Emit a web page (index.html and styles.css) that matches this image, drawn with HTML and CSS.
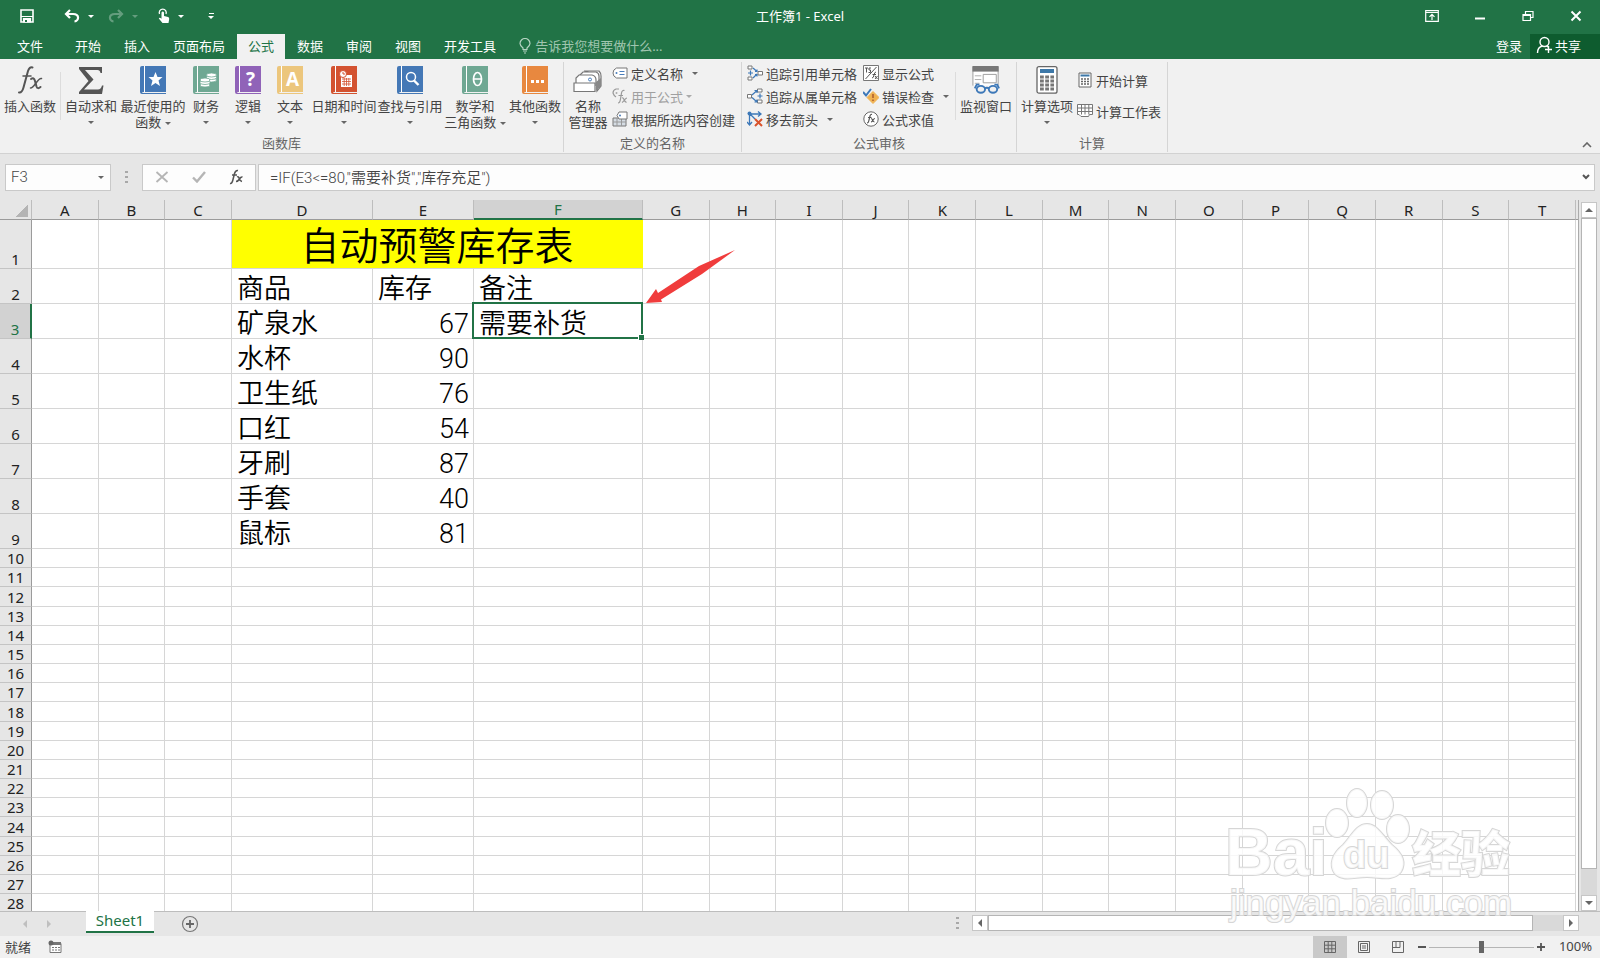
FILE: index.html
```html
<!DOCTYPE html>
<html lang="zh-CN">
<head>
    <meta charset="UTF-8">
    <title>工作簿1 - Excel</title>
    <link rel="stylesheet" href="styles.css">
</head>
<body>
<div class="app">
    <!-- 标题栏 -->
    <div class="titlebar">
        <div class="quick">
            <button class="save" aria-label="保存"><svg width="14" height="14" viewBox="0 0 14 14"><path d="M1 1h12v12H1z" fill="none" stroke="#fff" stroke-width="1.6"/><path d="M1 7.5h12M3.500 13V9.500h7V13z" fill="#fff" stroke="#fff" stroke-width="1.2"/><path d="M5 11h2v2H5z" fill="#217346"/></svg></button>
            <button aria-label="撤消"><svg width="16" height="14" viewBox="0 0 16 14"><path d="M6 1L2 5l4 4M2.500 5H9c7 0 6 7 1.500 7.500" fill="none" stroke="#fff" stroke-width="2.200"/></svg><i class="caret white"></i></button>
            <button class="off" aria-label="恢复"><svg width="16" height="14" viewBox="0 0 16 14"><path d="M10 1l4 4-4 4M13.500 5H7C0 5 1 12 5.500 12.500" fill="none" stroke="#fff" stroke-width="2.200"/></svg><i class="caret white"></i></button>
            <button class="touch" aria-label="触摸/鼠标模式"><svg width="12" height="16" viewBox="0 0 12 16"><path d="M1.500 6A3.500 3.500 0 1 1 8 6" fill="none" stroke="#fff" stroke-width="1.300"/><path d="M3.500 4.500q1.400-2 2.500 0V8l4 1q1.500.5 1.200 2L10.500 15H4.500L.8 10.500q.8-1.500 2.700.3z" fill="#fff"/></svg><i class="caret white"></i></button>
            <button class="more" aria-label="自定义快速访问工具栏"><i class="bar"></i><i class="caret white"></i></button>
        </div>
        <h1>工作簿1 - Excel</h1>
        <div class="wins">
            <button aria-label="功能区显示选项"><svg width="14" height="12" viewBox="0 0 14 12"><path d="M.7.7h12.600v10.600H.7zM.7 2.500h12.600M7 10V4.500M4.500 6.800L7 4.300l2.500 2.500" fill="none" stroke="#fff" stroke-width="1.200"/></svg></button>
            <button aria-label="最小化"><svg width="12" height="12" viewBox="0 0 12 12"><path d="M1 8.500h10" stroke="#fff" stroke-width="2"/></svg></button>
            <button aria-label="还原"><svg width="12" height="12" viewBox="0 0 12 12"><path d="M1 4.500h7.500V10.500H1zM1 5.500h7.500M3.500 4V1.500H11V7.500H9" fill="none" stroke="#fff" stroke-width="1.200"/></svg></button>
            <button aria-label="关闭"><svg width="12" height="12" viewBox="0 0 12 12"><path d="M1.500 1.500l9 9M10.500 1.500l-9 9" stroke="#fff" stroke-width="2"/></svg></button>
        </div>
    </div>

    <!-- 选项卡 -->
    <div class="tabs">
        <button class="file">文件</button>
        <button>开始</button>
        <button>插入</button>
        <button>页面布局</button>
        <button class="current">公式</button>
        <button>数据</button>
        <button>审阅</button>
        <button>视图</button>
        <button>开发工具</button>
        <label class="tell"><svg width="12" height="16" viewBox="0 0 12 16"><path d="M4 11.500V10Q1 7.500 1 5.500a5 5 0 0 1 10 0Q11 7.500 8 10v1.500zM4 13h4M5 15h2" fill="none" stroke="#b5d3c1" stroke-width="1.200"/></svg><input type="text" placeholder="告诉我您想要做什么..." aria-label="告诉我您想要做什么"></label>
        <button class="login">登录</button>
        <button class="share"><svg width="18" height="18" viewBox="0 0 18 18"><circle cx="8.500" cy="6" r="4.500" fill="none" stroke="#fff" stroke-width="1.400"/><path d="M1.500 17q0-6 5-7M10.500 10l1.500 1M9 13.500h7M12.500 10v7" fill="none" stroke="#fff" stroke-width="1.400"/></svg>共享</button>
    </div>

    <!-- 功能区 -->
    <div class="ribbon">
        <div class="group">
            <div class="tools">
                <button class="big m"><svg width="28" height="28" viewBox="0 0 28 28"><g fill="none" stroke="#555" stroke-linecap="round"><path d="M3 26.500q3 .5 4.500-5L12 5q1.500-4.500 4.500-3.500" stroke-width="2"/><path d="M7 10h8" stroke-width="1.500"/><path d="M15 13q3-2 4 2l1.500 5.500q1 3 4 .5" stroke-width="2"/><path d="M25.500 12.500q-2-.5-5.500 4.500t-5.500 5" stroke-width="1.500"/></g></svg><span>插入函数</span></button>
                <i class="sep"></i>
                <button class="big m"><svg width="28" height="28" viewBox="0 0 28 28"><path d="M2 1h23v6h-1.500q-.5-3-3-3H8l8.500 9.500L7 23.500h14q3 0 4-4h1.500L25 28H2v-2l9.500-11L2 3z" fill="#555"/></svg><span>自动求和</span><i class="caret"></i></button>
                <button class="big l"><svg class="book blue" width="26" height="28" viewBox="0 0 26 28"><path d="M2 0h24v26H3q-2 .5 0 1h23v1H2q-2 0-2-2V2q0-2 2-2z"/><path d="M4 0h1v26H4z" fill="#fff"/><path d="M15.500 6l2 5h5l-4 3.500 1.500 5.500-4.500-3-4.500 3 1.500-5.500-4-3.500h5z" fill="#fff"/></svg><span>最近使用的<br>函数 <i class="caret"></i></span></button>
                <button class="big s"><svg class="book green" width="26" height="28" viewBox="0 0 26 28"><path d="M2 0h24v26H3q-2 .5 0 1h23v1H2q-2 0-2-2V2q0-2 2-2z"/><path d="M4 0h1v26H4z" fill="#fff"/><g fill="#fff" stroke="#6fa893" stroke-width=".8"><ellipse cx="18.500" cy="14" rx="5" ry="2"/><ellipse cx="18.500" cy="11.500" rx="5" ry="2"/><ellipse cx="18.500" cy="9" rx="5" ry="2"/><ellipse cx="12" cy="19" rx="5" ry="2"/><ellipse cx="12" cy="16.500" rx="5" ry="2"/><ellipse cx="12" cy="14" rx="5" ry="2"/></g></svg><span>财务</span><i class="caret"></i></button>
                <button class="big s"><svg class="book purple" width="26" height="28" viewBox="0 0 26 28"><path d="M2 0h24v26H3q-2 .5 0 1h23v1H2q-2 0-2-2V2q0-2 2-2z"/><path d="M4 0h1v26H4z" fill="#fff"/><text x="15.500" y="20">?</text></svg><span>逻辑</span><i class="caret"></i></button>
                <button class="big s"><svg class="book yellow" width="26" height="28" viewBox="0 0 26 28"><path d="M2 0h24v26H3q-2 .5 0 1h23v1H2q-2 0-2-2V2q0-2 2-2z"/><path d="M4 0h1v26H4z" fill="#fff"/><text x="15.500" y="20">A</text></svg><span>文本</span><i class="caret"></i></button>
                <button class="big xl"><svg class="book red" width="26" height="28" viewBox="0 0 26 28"><path d="M2 0h24v26H3q-2 .5 0 1h23v1H2q-2 0-2-2V2q0-2 2-2z"/><path d="M4 0h1v26H4z" fill="#fff"/><path d="M10 9h11v12H10z" fill="#fff"/><path d="M11 13h9M11 15.500h9M11 18h9M13.200 12v8M15.500 12v8M17.800 12v8" stroke="#d35230" stroke-width=".8"/><circle cx="12" cy="8" r="3.500" fill="#fff" stroke="#d35230"/><path d="M12 6v2h2" fill="none" stroke="#d35230"/></svg><span>日期和时间</span><i class="caret"></i></button>
                <button class="big xl"><svg class="book blue" width="26" height="28" viewBox="0 0 26 28"><path d="M2 0h24v26H3q-2 .5 0 1h23v1H2q-2 0-2-2V2q0-2 2-2z"/><path d="M4 0h1v26H4z" fill="#fff"/><circle cx="14" cy="11" r="4.500" fill="none" stroke="#fff" stroke-width="1.500"/><path d="M17 14.500l4.500 4.500" stroke="#fff" stroke-width="2.400"/></svg><span>查找与引用</span><i class="caret"></i></button>
                <button class="big l"><svg class="book green" width="26" height="28" viewBox="0 0 26 28"><path d="M2 0h24v26H3q-2 .5 0 1h23v1H2q-2 0-2-2V2q0-2 2-2z"/><path d="M4 0h1v26H4z" fill="#fff"/><ellipse cx="15.500" cy="13" rx="4" ry="6.500" fill="none" stroke="#fff" stroke-width="1.700"/><path d="M12 13h7" stroke="#fff" stroke-width="1.500"/></svg><span>数学和<br>三角函数 <i class="caret"></i></span></button>
                <button class="big o"><svg class="book orange" width="26" height="28" viewBox="0 0 26 28"><path d="M2 0h24v26H3q-2 .5 0 1h23v1H2q-2 0-2-2V2q0-2 2-2z"/><path d="M4 0h1v26H4z" fill="#fff"/><path d="M9 14h3v3H9zM14 14h3v3h-3zM19 14h3v3h-3z" fill="#fff"/></svg><span>其他函数</span><i class="caret"></i></button>
            </div>
            <div class="name">函数库</div>
        </div>

        <div class="group">
            <div class="tools">
                <button class="big n"><svg width="30" height="28" viewBox="0 0 30 28"><g fill="#fff" stroke="#777" stroke-width="1.200"><path d="M11 5h15q2 2 2 5v10l-4 5V9z"/><path d="M7 16V9l3-3h13q3 1 3 4v12"/><path d="M3 17v-5l3-3h13q4 1 4 5v6"/><path d="M1 17h21v8.500H1z"/></g><path d="M23 25l5-5v-8l-5 4z" fill="#888"/><circle cx="17" cy="13.500" r="1.500" fill="none" stroke="#4a7ebb"/></svg><span>名称<br>管理器</span></button>
                <div class="list">
                    <button><svg width="16" height="16" viewBox="0 0 16 16"><path d="M4.500 3H15v10H4.500Q1 11.500 1 8t3.500-5z" fill="#fff" stroke="#777"/><circle cx="4.500" cy="8" r="1" fill="#4a7ebb"/><path d="M7.500 6.500h5M7.500 9.500h5" stroke="#4a7ebb"/></svg>定义名称<i class="caret"></i></button>
                    <button class="dim"><svg width="16" height="16" viewBox="0 0 16 16"><path d="M7 1h-3Q1 2 1 5q1 3 3 4M6 15q2 0 2.500-4l1-6q.5-3 3-2.500M6.500 7.500H11M10 10q1.500-.5 2 1.500t2.500 3M15 10q-1 0-2.500 2T10 14.500" fill="none" stroke="#999" stroke-width="1.200"/><circle cx="4.500" cy="5" r="1" fill="#aaa"/></svg>用于公式<i class="caret"></i></button>
                    <button><svg width="16" height="16" viewBox="0 0 16 16"><path d="M1 7h13v8H1z" fill="#d5dce3" stroke="#777"/><path d="M1 11h13M5 7v8M9.500 7v8" stroke="#999"/><path d="M7 1h8v7H7L5 4.500z" fill="#fff" stroke="#777"/><circle cx="8" cy="4.500" r="1" fill="#4a7ebb"/></svg>根据所选内容创建</button>
                </div>
            </div>
            <div class="name">定义的名称</div>
        </div>

        <div class="group">
            <div class="tools">
                <div class="list first">
                    <button><svg width="16" height="16" viewBox="0 0 16 16"><g fill="#fff" stroke="#777"><path d="M1 1h4v3H1zM1 12h4v3H1zM11 6.500h4.500v3.500H11z"/></g><path d="M1 8h5M3.500 5.500v5M6 3l4 3.500M8 6.500h2v-2M6 13l4-4M8 9.500h2v2" fill="none" stroke="#3d78b8" stroke-width="1.200"/></svg>追踪引用单元格</button>
                    <button><svg width="16" height="16" viewBox="0 0 16 16"><g fill="#fff" stroke="#777"><path d="M10.500 1h4.500v3h-4.500zM10.500 12h4.500v3h-4.500zM.5 6.500h4v3.500h-4z"/></g><path d="M10.500 8h5M13 5.500v5M5 7l4.500-4M7.500 2.500H10V5M5 9.500l4.500 4M7.500 14H10v-2.500" fill="none" stroke="#3d78b8" stroke-width="1.200"/></svg>追踪从属单元格</button>
                    <button><svg width="16" height="16" viewBox="0 0 16 16"><path d="M3 3h11M11 .5L14 3l-3 2.500M2.500 3v11M0 11l2.500 3L5 11M3 3l5 5" fill="none" stroke="#3d78b8" stroke-width="1.300"/><circle cx="2.500" cy="2.500" r="2" fill="#3d78b8"/><path d="M8 8l7 7M15 8l-7 7" stroke="#d9532c" stroke-width="2"/></svg>移去箭头<i class="caret"></i></button>
                </div>
                <div class="list">
                    <button><svg width="16" height="16" viewBox="0 0 16 16"><path d="M.5.5h15v15H.5z" fill="#fff" stroke="#777"/><path d="M13.500 2L2.500 14M2 3h3M3.500 3v4.500M8 3H6v2h1.500v2.500H5.500M9 13q1.500 0 2-3t2-3M9.500 9.500H13M12 11l2.500 3M14.500 11L12 14" fill="none" stroke="#555"/></svg>显示公式</button>
                    <button><svg width="16" height="16" viewBox="0 0 16 16"><path d="M10 3.500l6 6-6 6-6-6z" fill="#f0b252" stroke="#f0b252" stroke-linejoin="round"/><path d="M10 6v4M10 11.500V13" stroke="#a5562c" stroke-width="1.400"/><path d="M0 4l3 3.500L8 1" fill="none" stroke="#3d78b8" stroke-width="2"/></svg>错误检查<i class="caret"></i></button>
                    <button><svg width="16" height="16" viewBox="0 0 16 16"><circle cx="8" cy="8" r="7.200" fill="#fff" stroke="#666"/><path d="M4 12q1.500 0 2-3l1-4q.5-2 2-1.500M5 6.500h3.500M8 7.500q1 0 1.500 1.700t2 1.800M12 7.500q-1 0-2 1.700T8 11" fill="none" stroke="#555" stroke-width="1.200"/></svg>公式求值</button>
                </div>
                <i class="sep"></i>
                <button class="big m"><svg width="30" height="30" viewBox="0 0 30 30"><path d="M1 1h27v22H1z" fill="#fff" stroke="#999"/><path d="M.5 0h28v6H.5z" fill="#777"/><path d="M3 10.500h7M3 14.500h7M3 18.500h5" stroke="#aaa"/><path d="M12 9h14v9H12z" fill="#fff" stroke="#999"/><path d="M0 21h30v9H0z" fill="#f1f1f1"/><g fill="none" stroke="#3d78b8" stroke-width="2"><ellipse cx="9.500" cy="25" rx="4.500" ry="3.700"/><ellipse cx="22.500" cy="25" rx="4.500" ry="3.700"/><path d="M13.500 24q2.500-1.500 5 0M3 24l2-4h3M29 24l-2-4h-3"/></g></svg><span>监视窗口</span></button>
            </div>
            <div class="name">公式审核</div>
        </div>

        <div class="group">
            <div class="tools">
                <button class="big m"><svg width="22" height="28" viewBox="0 0 22 28"><rect x="1" y=".7" width="20" height="26.500" rx="2" fill="#fff" stroke="#666" stroke-width="1.300"/><path d="M4 3h14v4H4z" fill="#3d78a8"/><path d="M4 9.500h3.800v3H4zM9.200 9.500H13v3H9.200zM14.400 9.500H18v3h-3.600zM4 13.500h3.800v3H4zM9.200 13.500H13v3H9.200zM14.400 13.500H18v3h-3.600zM4 17.500h3.800v3H4zM9.200 17.500H13v3H9.200zM14.400 17.500H18v3h-3.600zM4 21.500h3.800v3H4zM9.200 21.500H13v3H9.200zM14.400 21.500H18v3h-3.600z" fill="#777"/></svg><span>计算选项</span><i class="caret"></i></button>
                <div class="list two">
                    <button><svg width="16" height="16" viewBox="0 0 16 16"><path d="M2 1h12v14H2z" fill="#fff" stroke="#666"/><path d="M3.500 2.500h9v2h-9z" fill="#3d78a8"/><path d="M4 7h2M7 7h2M10 7h2M4 9.500h2M7 9.500h2M10 9.500h2M4 12h2M7 12h2M10 12h2" stroke="#666" stroke-width="1.500"/></svg>开始计算</button>
                    <button><svg width="16" height="16" viewBox="0 0 16 16"><path d="M.5 1.500h15v10h-3l-1 2H4l-2-2H.5zM.5 5h15M.5 8.500h15M4.500 1.500v10M8 1.500v10M11.800 1.500v10" fill="#fff" stroke="#777"/></svg>计算工作表</button>
                </div>
            </div>
            <div class="name">计算</div>
        </div>
        <button class="fold" aria-label="折叠功能区"><svg width="10" height="6" viewBox="0 0 10 6"><path d="M1 5l4-4 4 4" fill="none" stroke="#666" stroke-width="1.600"/></svg></button>
    </div>

    <!-- 编辑栏 -->
    <div class="formula">
        <div class="box namebox"><input type="text" value="F3" aria-label="名称框"><button aria-label="名称列表"><i class="caret"></i></button></div>
        <i class="dots"></i>
        <div class="box ops">
            <button aria-label="取消"><svg width="14" height="12" viewBox="0 0 14 12"><path d="M1.500 1l11 10M12.500 1l-11 10" stroke="#b5b5b5" stroke-width="1.800"/></svg></button>
            <button aria-label="输入"><svg width="14" height="12" viewBox="0 0 14 12"><path d="M1 6.500l4 4L13 1" fill="none" stroke="#b5b5b5" stroke-width="2.400"/></svg></button>
            <button aria-label="插入函数"><svg width="14" height="16" viewBox="0 0 14 16"><path d="M1 14.500q2 .5 3-4l1.500-6Q6.500 1 9 1.500M3 6h5M8 8q1.500-1 2.200 1.500T13 12.500M13.500 8q-1.500-.5-3 2T7 12.500" fill="none" stroke="#555" stroke-width="1.500"/></svg></button>
        </div>
        <div class="box fx"><input type="text" value='=IF(E3&lt;=80,"需要补货","库存充足")' aria-label="编辑栏"><button aria-label="展开编辑栏"><svg width="8" height="6" viewBox="0 0 8 6"><path d="M1 1l3 3 3-3" fill="none" stroke="#555" stroke-width="2"/></svg></button></div>
    </div>

    <!-- 工作表 -->
    <div class="sheet">
        <div class="cells">
            <table>
                <colgroup id="cols"></colgroup>
                <thead><tr id="head"></tr></thead>
                <tbody id="rows"></tbody>
            </table>
            <svg class="arrow" width="92" height="56" viewBox="0 0 92 56"><path d="M1 54L11 40l2 4L54 17 90 1 57 25 16 50.500l1 2.500z" fill="#f03c3c"/></svg>
        </div>
        <div class="vscroll">
            <button aria-label="向上滚动"><i class="tri up"></i></button>
            <div class="thumb"></div>
            <button aria-label="向下滚动"><i class="tri down"></i></button>
        </div>
    </div>

    <div class="sheetbar">
        <div class="nav"><i class="tri left"></i><i class="tri right"></i></div>
        <button class="sheettab">Sheet1</button>
        <button class="add" aria-label="新工作表"><svg width="18" height="18" viewBox="0 0 18 18"><circle cx="9" cy="9" r="7.500" fill="none" stroke="#777" stroke-width="1.200"/><path d="M9 5v8M5 9h8" stroke="#666" stroke-width="1.800"/></svg></button>
        <div class="hscroll">
            <i class="dots"></i>
            <button aria-label="向左滚动"><i class="tri left"></i></button>
            <div class="thumb"></div>
            <button aria-label="向右滚动"><i class="tri right"></i></button>
        </div>
    </div>

    <!-- 状态栏 -->
    <div class="status">
        <span>就绪</span>
        <svg width="14" height="14" viewBox="0 0 14 14"><path d="M2 3.500h11v9H2z" fill="#fff" stroke="#777"/><path d="M5 2h8v3H5z" fill="#777"/><circle cx="3" cy="3" r="2.500" fill="#666"/><path d="M4 7.500h2M7 7.500h2M10 7.500h2M4 10h2M7 10h2M10 10h2" stroke="#777"/></svg>
        <div class="views">
            <button class="on" aria-label="普通"><svg width="12" height="12" viewBox="0 0 12 12"><path d="M.5.5h11v11H.5zM.5 4.200h11M.5 7.800h11M4.200.5v11M7.800.5v11" fill="none" stroke="#666"/></svg></button>
            <button aria-label="页面布局"><svg width="12" height="12" viewBox="0 0 12 12"><path d="M.5.5h11v11H.5zM2.500 2.500h7v7h-7zM4 5h4M4 7h4" fill="none" stroke="#666"/></svg></button>
            <button aria-label="分页预览"><svg width="12" height="12" viewBox="0 0 12 12"><path d="M.5.5h11v11H.5zM4 .5v6M8 .5v6H.5" fill="none" stroke="#666"/></svg></button>
        </div>
        <button class="zoombtn" aria-label="缩小"><svg width="10" height="10" viewBox="0 0 10 10"><path d="M1 5h8" stroke="#555" stroke-width="2"/></svg></button>
        <input type="range" min="0" max="100" value="50" aria-label="显示比例">
        <button class="zoombtn" aria-label="放大"><svg width="10" height="10" viewBox="0 0 10 10"><path d="M1 5h8M5 1v8" stroke="#555" stroke-width="1.800"/></svg></button>
        <span class="pct">100%</span>
    </div>

    <svg class="mark" width="300" height="150" viewBox="0 0 300 150">
        <g class="line">
            <ellipse cx="117" cy="47" rx="11" ry="14"/>
            <ellipse cx="137" cy="27" rx="10" ry="14"/>
            <ellipse cx="162" cy="29" rx="11" ry="14"/>
            <ellipse cx="178" cy="53" rx="11" ry="14"/>
            <path d="M147 48C157 48 163 60 172 69C182 77 187 86 181 96C173 106 160 101 147 101C134 101 124 106 115 98C108 88 113 77 123 69C131 61 136 48 147 48z"/>
            <text x="5" y="99" class="bai">Bai</text>
            <text x="123" y="92" class="du">du</text>
            <text x="192" y="96" class="jy">经验</text>
            <text x="10" y="139" class="url">jingyan.baidu.com</text>
        </g>
    </svg>
</div>
<script src="script.js"></script>
</body>
</html>
```
FILE: styles.css
```css
* {
    padding: 0;
    margin: 0;
    box-sizing: border-box;
}
body {
    font-family: "Noto Sans", "Noto Sans CJK SC", sans-serif;
    font-size: 13px;
    color: #444;
    background: #e6e6e6;
}
button, input {
    font: inherit;
    color: inherit;
    border: none;
    background: none;
    outline: none;
}
button {
    display: flex;
    align-items: center;
    justify-content: center;
    white-space: nowrap;
}
svg {
    display: block;
    flex: none;
}
.app {
    position: relative;
    display: flex;
    flex-direction: column;
    height: 100vh;
    overflow: hidden;
}
.caret {
    display: inline-block;
    border: 3px solid transparent;
    border-top-color: #666;
    border-bottom: none;
    vertical-align: middle;
}
.caret.white {
    border-top-color: #fff;
}

/* 标题栏 */
.titlebar {
    display: grid;
    grid-template-columns: 1fr auto 1fr;
    align-items: center;
    height: 34px;
    padding-bottom: 2px;
    background: #217346;
    color: #fff;
}
.titlebar h1 {
    font-size: 13px;
    font-weight: normal;
    line-height: 20px;
}
.quick {
    display: flex;
    gap: 14px;
    padding-left: 20px;
}
.quick button {
    gap: 8px;
}
.quick .save {
    margin-right: 16px;
}
.quick .touch {
    margin-left: 6px;
}
.quick .off {
    opacity: 0.3;
}
.quick .more {
    flex-direction: column;
    gap: 2px;
    margin-left: 10px;
}
.bar {
    width: 5px;
    height: 1px;
    background: #fff;
}
.wins {
    display: flex;
    justify-content: flex-end;
}
.wins button {
    width: 48px;
    height: 32px;
}

/* 选项卡 */
.tabs {
    display: flex;
    gap: 1px;
    height: 25px;
    background: #217346;
    color: #fff;
}
.tabs button {
    padding: 0 11px 3px;
}
.tabs .file {
    width: 60px;
    margin-right: 3px;
}
.tabs .current {
    background: #f1f1f1;
    color: #217346;
}
.tell {
    display: flex;
    align-items: center;
    gap: 4px;
    margin-left: 11px;
    padding-bottom: 2px;
    flex: 1;
}
.tell input {
    width: 200px;
}
.tell input::placeholder {
    color: #9fc5af;
}
.tabs .login {
    padding: 0 7px 3px;
}
.tabs .share {
    width: 70px;
    gap: 1px;
    padding: 0 13px 3px 0;
    background: #0e5c2f;
}

/* 功能区 */
.ribbon {
    position: relative;
    display: flex;
    height: 95px;
    padding: 3px 0 1px;
    background: #f1f1f1;
    border-bottom: 1px solid #d2d2d2;
}
.group {
    display: flex;
    flex-direction: column;
    justify-content: space-between;
    border-right: 1px solid #d5d5d5;
}
.tools {
    display: flex;
}
.group .name {
    text-align: center;
    line-height: 18px;
    color: #666;
}
.big {
    flex-direction: column;
    justify-content: flex-start;
    padding-top: 4px;
    line-height: 16px;
}
.big svg {
    height: 28px;
    margin-bottom: 4px;
    overflow: visible;
}
.big > .caret {
    margin-top: 7px;
}
.s { width: 42px; }
.n { width: 48px; }
.o { width: 56px; }
.m { width: 60px; }
.l { width: 64px; }
.xl { width: 66px; }
.sep {
    width: 1px;
    height: 48px;
    margin-top: 10px;
    background: #dcdcdc;
}
.book text {
    font: bold 19px "Open Sans", sans-serif;
    fill: #fff;
    text-anchor: middle;
}
.blue { fill: #4478b6; }
.green { fill: #6fa893; }
.purple { fill: #9063b8; }
.yellow { fill: #ecc67c; }
.red { fill: #d35230; }
.orange { fill: #e8883f; }
.list {
    display: flex;
    flex-direction: column;
    align-items: flex-start;
}
.list button {
    height: 23px;
    gap: 3px;
    padding: 0 6px 1px 0;
}
.list .caret {
    margin-left: 6px;
}
.list.first {
    padding-left: 5px;
}
.list.two {
    gap: 8px;
    padding-top: 7px;
}
.list .dim {
    color: #a0a0a0;
}
.dim .caret {
    margin-left: 0;
    border-top-color: #aaa;
}
.fold {
    position: absolute;
    right: 8px;
    bottom: 5px;
}

/* 编辑栏 */
.formula {
    display: flex;
    align-items: center;
    height: 46px;
    padding: 0 5px;
    font-family: Roboto, "Noto Sans CJK SC", sans-serif;
    font-size: 15px;
    font-weight: 350;
}
.box {
    display: flex;
    height: 27px;
    background: #fdfdfd;
    border: 1px solid #c9c9c9;
}
.box input {
    flex: 1;
    min-width: 0;
    padding-bottom: 1px;
}
.namebox {
    width: 106px;
    padding: 0 6px 0 5px;
}
.dots {
    width: 3px;
    height: 12px;
    margin: 0 14px;
    background: repeating-linear-gradient(#a8a8a8 0 2px, transparent 2px 5px);
}
.ops {
    width: 114px;
    margin-right: 2px;
}
.ops button {
    flex: 1;
}
.fx {
    flex: 1;
    padding: 0 4px 0 11px;
}

/* 工作表 */
.sheet {
    display: flex;
    flex: 1;
    min-height: 0;
}
.cells {
    position: relative;
    flex: 1;
    padding-right: 2px;
    background: linear-gradient(#e6e6e6 19px, #9b9b9b 19px 20px, #fff 20px);
    border-right: 1px solid #ababab;
    overflow: hidden;
}
table {
    width: 100%;
    table-layout: fixed;
    border-collapse: separate;
    border-spacing: 0;
}
.c-row { width: 32px; }
.c-d { width: 141px; }
.c-e { width: 101px; }
.c-f { width: 169px; }
th {
    font-size: 15px;
    font-weight: normal;
    line-height: 18px;
    color: #222;
    background: #e6e6e6;
}
thead th {
    height: 20px;
    border-right: 1px solid #bdbdbd;
    border-bottom: 1px solid #9b9b9b;
}
thead th.on {
    color: #217346;
    background: #d2d2d2;
    border-bottom: 2px solid #217346;
}
.corner {
    background: linear-gradient(135deg, #e6e6e6 50%, #b4b4b4 50%) 15px 5px / 13px 12px no-repeat #e6e6e6;
}
tbody th {
    vertical-align: bottom;
    border-right: 1px solid #9b9b9b;
    border-bottom: 1px solid #c4c4c4;
}
tbody th.on {
    color: #217346;
    background: #d2d2d2;
    border-right: 2px solid #217346;
}
tbody tr {
    height: 19px;
}
tbody tr:nth-child(6n) {
    height: 20px;
}
tbody .data {
    height: 35px;
}
tbody .top {
    height: 49px;
}
td {
    border-right: 1px solid #d6d6d6;
    border-bottom: 1px solid #d6d6d6;
    font-family: Roboto, "Noto Sans CJK SC", sans-serif;
    font-size: 27px;
    font-weight: 350;
    line-height: 28px;
    color: #000;
    white-space: nowrap;
}
.data td {
    padding: 6px 4px 0 5px;
}
.num {
    text-align: right;
}
.title {
    padding-top: 6px;
    font-size: 39px;
    line-height: 42px;
    text-align: center;
    background: #ff0;
    border-right-color: #ff0;
}
.picked {
    position: relative;
}
.picked::before {
    content: "";
    position: absolute;
    inset: -2px -1px -1px -2px;
    border: 2px solid #217346;
}
.picked::after {
    content: "";
    position: absolute;
    right: -2px;
    bottom: -2px;
    width: 5px;
    height: 5px;
    background: #217346;
    border: solid #fff;
    border-width: 1px 0 0 1px;
}
.arrow {
    position: absolute;
    left: 645px;
    top: 49px;
}
.tri {
    border: 4px solid transparent;
}
.up { border-bottom-color: #666; border-top: none; }
.down { border-top-color: #666; border-bottom: none; }
.left { border-right-color: #666; border-left: none; }
.right { border-left-color: #666; border-right: none; }
.vscroll {
    display: flex;
    flex-direction: column;
    width: 16px;
    margin: 2px 3px 0 2px;
    background: #d9d9d9;
}
.vscroll button {
    height: 16px;
    background: #fff;
    border: 1px solid #c6c6c6;
}
.thumb {
    background: #fff;
    border: 1px solid #b5b5b5;
}
.vscroll .thumb {
    flex: 1;
    margin-bottom: 26px;
}

.sheetbar {
    display: flex;
    height: 25px;
    border-top: 1px solid #bdbdbd;
}
.nav {
    display: flex;
    align-items: center;
    gap: 20px;
    width: 86px;
    padding-left: 23px;
    opacity: 0.3;
}
.sheettab {
    width: 68px;
    height: 22px;
    margin-top: -1px;
    padding-bottom: 3px;
    font-size: 15px;
    color: #217346;
    background: #fff;
    border-bottom: 2px solid #217346;
}
.add {
    margin-left: 27px;
}
.hscroll {
    display: flex;
    width: 40%;
    height: 16px;
    margin: 3px 21px 0 auto;
    background: linear-gradient(90deg, transparent 50%, #d9d9d9 50%);
}
.hscroll .dots {
    margin: 2px 13px 0 17px;
}
.hscroll button {
    width: 16px;
    background: #fff;
    border: 1px solid #c6c6c6;
}
.hscroll .thumb {
    flex: 1;
    margin-right: 30px;
}

/* 状态栏 */
.status {
    display: flex;
    align-items: center;
    height: 22px;
    padding: 0 8px 0 5px;
    background: #f1f1f1;
}
.status span {
    padding-bottom: 2px;
}
.status > svg {
    margin-left: 17px;
}
.views {
    display: flex;
    margin-left: auto;
}
.views button {
    width: 34px;
    height: 22px;
}
.views .on {
    background: #c9c9c9;
}
.zoombtn {
    width: 14px;
    height: 20px;
}
.status input {
    appearance: none;
    width: 105px;
    height: 20px;
    background: linear-gradient(#b5b5b5, #b5b5b5) center / 100% 1px no-repeat;
}
.status input::-webkit-slider-thumb {
    appearance: none;
    width: 5px;
    height: 12px;
    background: #666;
}
.pct {
    margin-left: 11px;
}

/* 水印 */
.mark {
    position: absolute;
    right: 80px;
    bottom: 32px;
    pointer-events: none;
}
.line {
    fill: #fff;
    fill-opacity: 0.8;
    stroke: #d6d6d6;
    stroke-width: 2px;
    paint-order: stroke;
}
.bai {
    font: bold 66px "Liberation Sans", sans-serif;
}
.du {
    font: bold 38px "Liberation Sans", sans-serif;
}
.jy {
    font: 900 49px "Noto Sans CJK SC", sans-serif;
}
.url {
    font: 35px "Liberation Sans", sans-serif;
}
```
FILE: script.js
```js
var names = "ABCDEFGHIJKLMNOPQRST".split("");
var data = {
    2: ["商品", "库存", "备注"],
    3: ["矿泉水", 67, "需要补货"],
    4: ["水杯", 90, ""],
    5: ["卫生纸", 76, ""],
    6: ["口红", 54, ""],
    7: ["牙刷", 87, ""],
    8: ["手套", 40, ""],
    9: ["鼠标", 81, ""]
};
var cols = '<col class="c-row">';
var head = '<th class="corner"></th>';
for (var i = 0; i < names.length; i++) {
    cols += '<col class="c-' + names[i].toLowerCase() + '">';
    head += '<th' + (names[i] == "F" ? ' class="on"' : '') + '>' + names[i] + '</th>';
}
document.getElementById("cols").innerHTML = cols;
document.getElementById("head").innerHTML = head;

var html = "";
for (var r = 1; r <= 28; r++) {
    html += '<tr class="' + (r == 1 ? "top" : data[r] ? "data" : "") + '">';
    html += '<th' + (r == 3 ? ' class="on"' : '') + '>' + r + '</th>';
    for (var c = 0; c < names.length; c++) {
        if (r == 1 && c == 3) {
            html += '<td class="title" colspan="3">自动预警库存表</td>';
            c += 2;
            continue;
        }
        var text = data[r] && c > 2 && c < 6 ? data[r][c - 3] : "";
        var cls = typeof text == "number" ? "num" : "";
        // 当前选中的单元格 F3
        if (r == 3 && c == 5) {
            cls = "picked";
        }
        html += '<td class="' + cls + '">' + text + '</td>';
    }
    html += '</tr>';
}
document.getElementById("rows").innerHTML = html;
```
